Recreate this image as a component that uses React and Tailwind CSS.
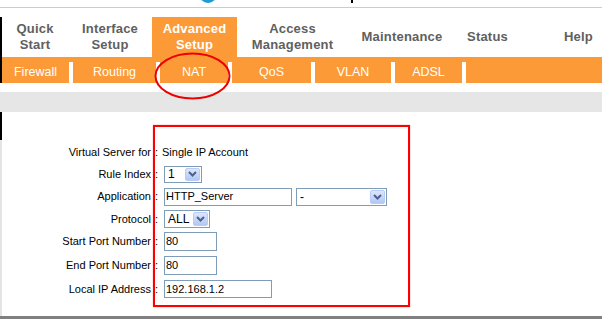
import React from "react";

const Chevron = () => (
  <svg width="9" height="6" viewBox="0 0 9 6" className="block">
    <path d="M1 1 L4.5 4.5 L8 1" fill="none" stroke="#4d6185" strokeWidth="2" />
  </svg>
);

const Select = ({ value, width, height = "h-[17px]" }) => (
  <div className={`flex items-center border border-[#7f9db9] bg-white ${width} ${height} p-px`}>
    <span className="flex-1 pl-[2px] text-[12px] leading-none text-black">{value}</span>
    <span className="flex items-center justify-center w-[15px] h-full rounded-[2px] border border-[#b9ccf8] bg-gradient-to-b from-[#dce6fe] to-[#b3c7f6]">
      <Chevron />
    </span>
  </div>
);

const TextInput = ({ value, width, height = "h-[19px]" }) => (
  <div className={`flex items-center border border-[#7f9db9] bg-white ${width} ${height} pl-px text-[11px] text-black`}>
    {value}
  </div>
);

const Row = ({ label, h, children }) => (
  <div className={`flex items-center ${h}`}>
    <div className="w-[149px] text-right text-[11px] text-black">{label}</div>
    <div className="w-[13px] pl-[4px] text-[11px] text-black">:</div>
    {children}
  </div>
);

const Sep = () => <div className="w-[4px] bg-white" />;

const App = () => {
  return (
    <div className="relative w-[609px] h-[319px] overflow-hidden bg-white font-['Liberation_Sans',Arial,sans-serif]">
      {/* header strip (cropped logo) */}
      <div className="w-[602px] h-[17px]">
        <div className="flex h-[7px]">
          <div className="ml-[199px] w-[18px] h-[3px] overflow-hidden">
            <div className="w-[18px] h-[18px] -mt-[15px] rounded-full bg-[#1e9ad6]" />
          </div>
          <div className="ml-[134px] w-[2px] h-[3px] bg-black" />
        </div>
        <div className="h-px bg-[#cccccc]" />
      </div>

      {/* main menu */}
      <div className="flex w-[602px] h-[40px] border-l-2 border-black text-[13px] font-bold leading-[16px] tracking-[0.2px] text-[#606060]">
        <div className="w-[66px] flex items-center justify-center text-center">Quick<br />Start</div>
        <div className="w-[84px] flex items-center justify-center text-center">Interface<br />Setup</div>
        <div className="w-[85px] flex items-center justify-center text-center bg-[#fb9a37] text-white">Advanced<br />Setup</div>
        <div className="w-[111px] flex items-center justify-center text-center">Access<br />Management</div>
        <div className="w-[108px] flex items-center justify-center">Maintenance</div>
        <div className="w-[63px] flex items-center justify-center">Status</div>
        <div className="flex-1 flex items-center justify-end pr-[9px]">Help</div>
      </div>

      {/* sub menu */}
      <div className="flex w-[602px] h-[26px] pt-[5px] border-l-2 border-black bg-[#fb9a37] text-[12.5px] text-white">
        <div className="w-[67px] flex items-center justify-center">Firewall</div>
        <Sep />
        <div className="w-[83px] flex items-center justify-center">Routing</div>
        <Sep />
        <div className="w-[68px] flex items-center justify-center">NAT</div>
        <Sep />
        <div className="w-[79px] flex items-center justify-center">QoS</div>
        <Sep />
        <div className="w-[76px] flex items-center justify-center">VLAN</div>
        <Sep />
        <div className="w-[67px] flex items-center justify-center">ADSL</div>
        <Sep />
        <div className="flex-1" />
      </div>

      <div className="h-[9px]" />
      <div className="w-[602px] h-[20px] bg-[#e6e6e6]" />

      {/* content */}
      <div className="flex w-[602px] h-[204px]">
        <div className="flex flex-col w-[2px]">
          <div className="h-[28px] bg-black" />
          <div className="flex-1 bg-[#e4e4e4]" />
        </div>
        <div className="flex-1 flex flex-col pt-[29px]">
          <Row label="Virtual Server for" h="h-[22px]">
            <span className="-ml-[2px] text-[11px] text-black">Single IP Account</span>
          </Row>
          <Row label="Rule Index" h="h-[22px]">
            <Select value="1" width="w-[38px]" />
          </Row>
          <Row label="Application" h="h-[23px]">
            <div className="flex gap-[4px]">
              <TextInput value="HTTP_Server" width="w-[128px]" height="h-[18px]" />
              <Select value="-" width="w-[91px]" height="h-[18px]" />
            </div>
          </Row>
          <Row label="Protocol" h="h-[22px]">
            <Select value="ALL" width="w-[46px]" height="h-[18px]" />
          </Row>
          <Row label="Start Port Number" h="h-[23px]">
            <TextInput value="80" width="w-[53px]" />
          </Row>
          <Row label="End Port Number" h="h-[24px]">
            <TextInput value="80" width="w-[53px]" />
          </Row>
          <Row label="Local IP Address" h="h-[24px]">
            <TextInput value="192.168.1.2" width="w-[108px]" height="h-[18px]" />
          </Row>
        </div>
      </div>

      <div className="w-[602px] h-[3px] bg-[#808080]" />

      {/* red annotations */}
      <svg className="absolute left-0 top-0 pointer-events-none" width="609" height="319">
        <ellipse cx="192.5" cy="76" rx="37" ry="22.5" fill="none" stroke="#ee0000" strokeWidth="2" />
      </svg>
      <div className="absolute left-[153px] top-[125px] w-[257px] h-[182px] border-2 border-[#ff0000] shadow-[0_0_1px_#ff6666] pointer-events-none" />
    </div>
  );
};

export default App;
